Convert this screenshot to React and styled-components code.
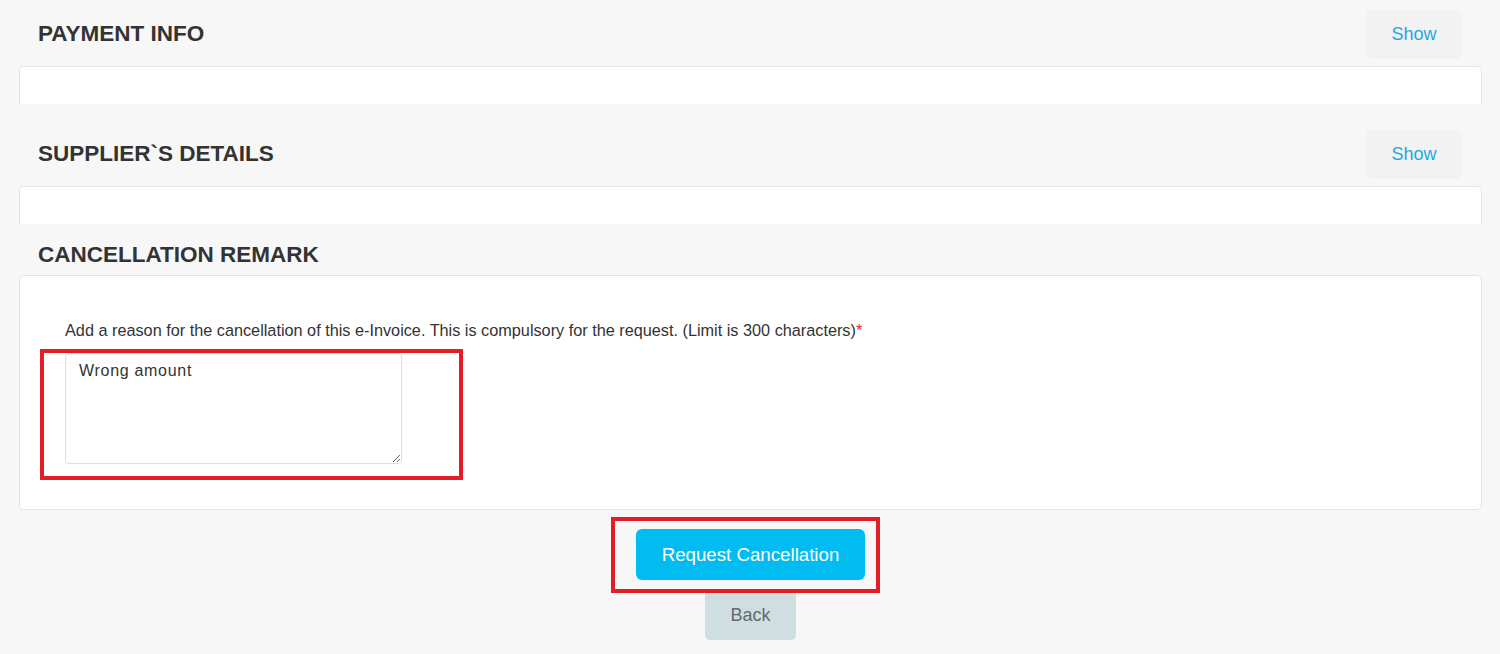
import React from 'react';
import styled, { createGlobalStyle } from 'styled-components';

const GlobalStyle = createGlobalStyle`
  html, body {
    margin: 0;
    padding: 0;
    background: #f7f7f7;
    font-family: "Liberation Sans", Arial, sans-serif;
    color: #333;
  }
`;

const Page = styled.div`
  padding: 0 18px 0 19px;
  width: 1463px;
  height: 654px;
  overflow: hidden;
`;

const SectionHead = styled.div`
  display: flex;
  align-items: center;
  justify-content: space-between;
  padding: ${(p) => p.$top}px 20px ${(p) => p.$bottom}px 19px;
  height: ${(p) => p.$height}px;
`;

const Title = styled.h2`
  margin: 0;
  font-size: 22.5px;
  font-weight: bold;
  color: #333;
  line-height: 1;
`;

const ShowButton = styled.button`
  width: 96px;
  height: 50px;
  border: none;
  border-radius: 6px;
  background: #f2f2f2;
  color: #1ea8de;
  font-family: "Liberation Sans", Arial, sans-serif;
  font-size: 18px;
  cursor: pointer;
`;

const Card = styled.div`
  background: #fff;
  border: 1px solid #e3e3e3;
  border-radius: 5px;
  height: ${(p) => p.$height}px;
  box-sizing: border-box;
  ${(p) => p.$clipped && `
    border-bottom: none;
    border-bottom-left-radius: 0;
    border-bottom-right-radius: 0;
  `}
`;

const RemarkCard = styled(Card)`
  padding: 45px 45px 0;
`;

const Label = styled.div`
  font-size: 16.25px;
  line-height: 18px;
  color: #333;
  margin-bottom: 14px;
`;

const Required = styled.span`
  color: #e8262b;
`;

const Highlight = styled.div`
  position: relative;
  width: 337px;
`;

const Annotation = styled.div`
  position: absolute;
  top: ${(p) => p.$t}px;
  left: ${(p) => p.$l}px;
  right: ${(p) => p.$r}px;
  bottom: ${(p) => p.$b}px;
  border: 4px solid #e41e26;
  pointer-events: none;
  z-index: 2;
`;

const TextArea = styled.textarea`
  display: block;
  width: 337px;
  height: 111px;
  box-sizing: border-box;
  border: 1px solid #ddd;
  border-radius: 4px;
  padding: 8px 13px;
  font-family: "Liberation Sans", Arial, sans-serif;
  font-size: 16px;
  letter-spacing: 0.7px;
  color: #333;
  background: #fff;
  outline: none;
`;

const Actions = styled.div`
  display: flex;
  flex-direction: column;
  align-items: center;
  padding-top: 19px;
  gap: 10px;
`;

const ActionWrap = styled.div`
  position: relative;
`;

const PrimaryButton = styled.button`
  display: block;
  width: 229px;
  height: 51px;
  border: none;
  border-radius: 6px;
  background: #00bcf0;
  color: #fff;
  font-family: "Liberation Sans", Arial, sans-serif;
  font-size: 18.7px;
  cursor: pointer;
`;

const BackButton = styled.button`
  width: 91px;
  height: 50px;
  border: none;
  border-radius: 5px;
  background: #cfdee1;
  color: #626b6d;
  font-family: "Liberation Sans", Arial, sans-serif;
  font-size: 18px;
  cursor: pointer;
`;

const Section = ({ title, top }) => (
  <>
    <SectionHead $top={top} $bottom={7} $height={50}>
      <Title>{title}</Title>
      <ShowButton>Show</ShowButton>
    </SectionHead>
    <Card $height={38} $clipped />
  </>
);

export default function App() {
  return (
    <Page>
      <GlobalStyle />
      <Section title="PAYMENT INFO" top={9} />
      <Section title="SUPPLIER`S DETAILS" top={25} />
      <SectionHead $top={16} $bottom={4} $height={31}>
        <Title>CANCELLATION REMARK</Title>
      </SectionHead>
      <RemarkCard $height={235}>
        <Label>
          Add a reason for the cancellation of this e-Invoice. This is compulsory for the request. (Limit is 300 characters)
          <Required>*</Required>
        </Label>
        <Highlight>
          <TextArea defaultValue="Wrong amount" />
          <Annotation $t={-4} $l={-25} $r={-61} $b={-16} />
        </Highlight>
      </RemarkCard>
      <Actions>
        <ActionWrap>
          <PrimaryButton>Request Cancellation</PrimaryButton>
          <Annotation $t={-12} $l={-25} $r={-15} $b={-13} />
        </ActionWrap>
        <BackButton>Back</BackButton>
      </Actions>
    </Page>
  );
}
